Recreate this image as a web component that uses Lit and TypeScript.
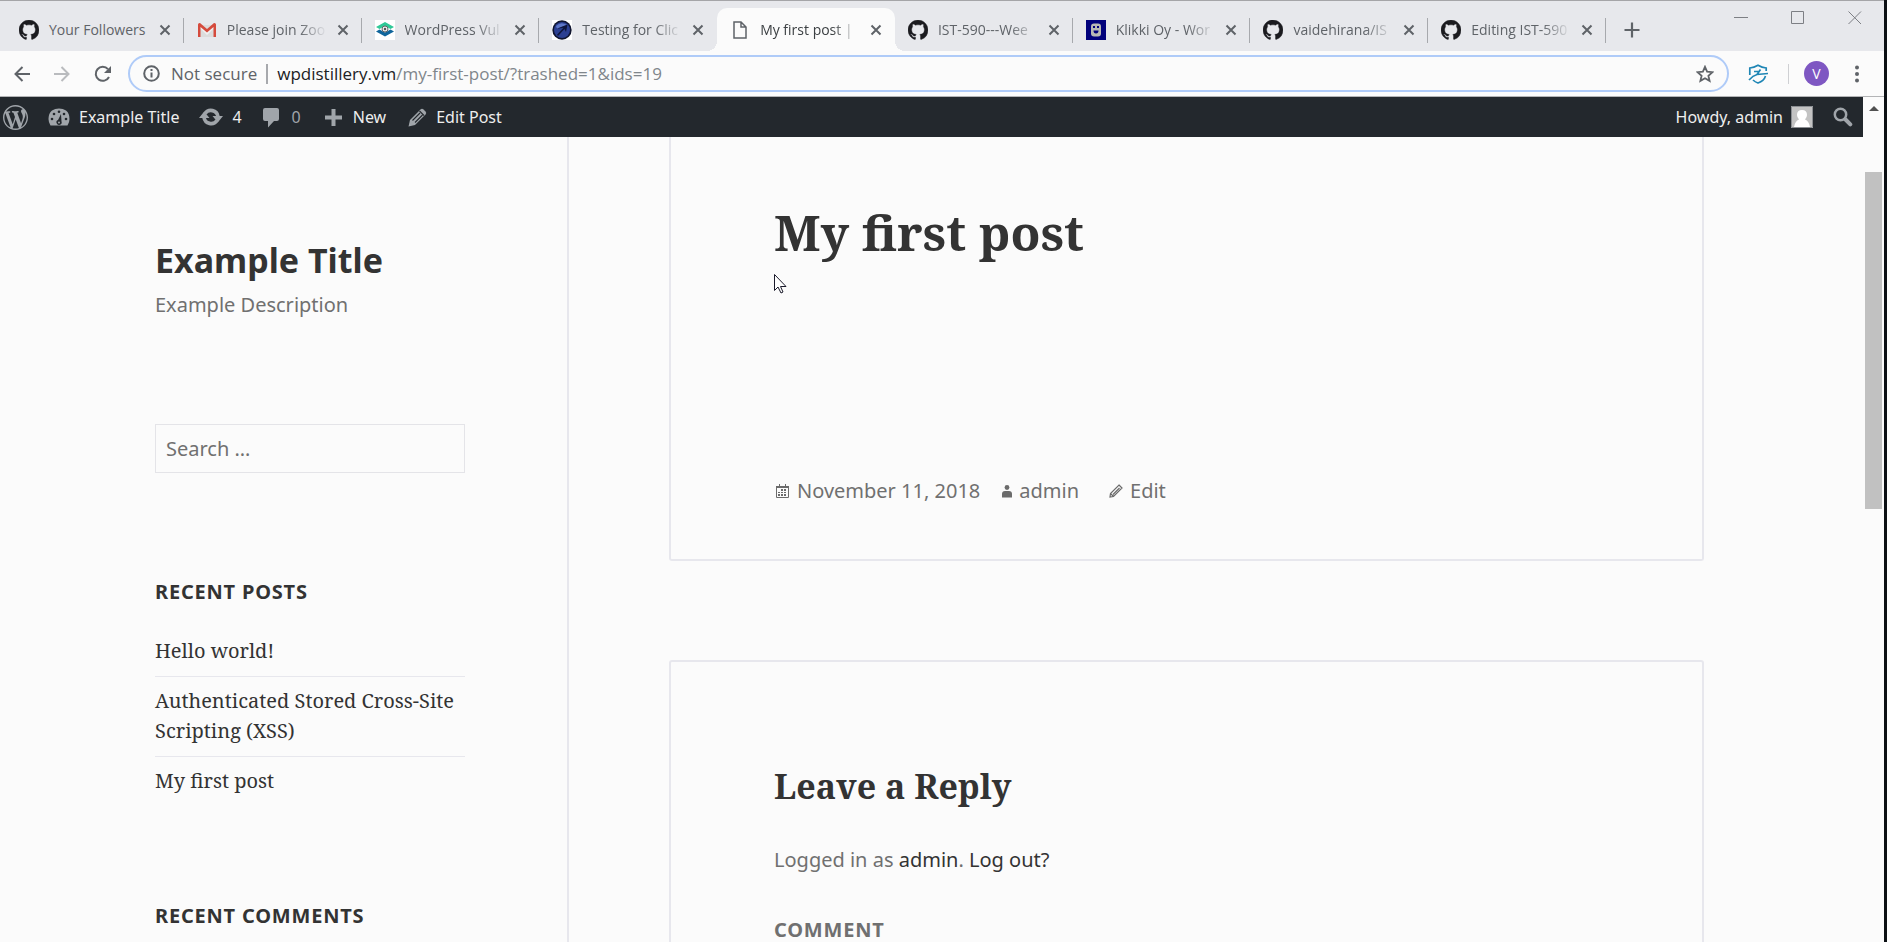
import { LitElement, html, css } from "lit";
import { customElement } from "lit/decorators.js";

const GITHUB = "M8 0C3.58 0 0 3.58 0 8c0 3.54 2.29 6.53 5.47 7.59.4.07.55-.17.55-.38 0-.19-.01-.82-.01-1.49-2.01.37-2.53-.49-2.69-.94-.09-.23-.48-.94-.82-1.13-.28-.15-.68-.52-.01-.53.63-.01 1.08.58 1.23.82.72 1.21 1.87.87 2.33.66.07-.52.28-.87.51-1.07-1.78-.2-3.64-.89-3.64-3.95 0-.87.31-1.59.82-2.15-.08-.2-.36-1.02.08-2.12 0 0 .67-.21 2.2.82.64-.18 1.32-.27 2-.27s1.36.09 2 .27c1.53-1.04 2.2-.82 2.2-.82.44 1.1.16 1.92.08 2.12.51.56.82 1.27.82 2.15 0 3.07-1.87 3.75-3.65 3.95.29.25.54.73.54 1.48 0 1.07-.01 1.93-.01 2.2 0 .21.15.46.55.38A8.01 8.01 0 0 0 16 8c0-4.42-3.58-8-8-8z";

const icons: Record<string, unknown> = {
  github: html`<svg width="20" height="20" viewBox="0 0 16 16" aria-hidden="true"><path fill="#1b1b1f" stroke="#1b1b1f" stroke-width=".3" d=${GITHUB} /></svg>`,
  gmail: html`<svg width="20" height="20" viewBox="0 0 20 20" aria-hidden="true"><path fill="#dcdcdc" d="M3 5h14v12H3z" /><path fill="#f1f1f1" d="M3 6l7 6 7-6v2l-7 7-7-7z" /><path fill="#d54b3d" d="M1 4.500Q1 3 2.600 3H3l7 6 7-6h.4Q19 3 19 4.500V17h-2.500V7L10 12.500 3.500 7v10H1z" /></svg>`,
  wpscan: html`<svg width="20" height="20" viewBox="0 0 20 20" aria-hidden="true"><path fill="#fff" d="M0 0h20v20H0z" /><path fill="#2fc997" d="M10 2l9 5-3.500 2L10 6 4.500 9 1 7z" /><path fill="#10659b" d="M1 11.500L4.500 9.500l5.500 3 5.500-3 3.500 2-9 5z" /><circle cx="10" cy="9" r="3" fill="#eee" stroke="#666" /><circle cx="10" cy="9" r="1.200" fill="#555" /></svg>`,
  owasp: html`<svg width="20" height="20" viewBox="0 0 20 20" aria-hidden="true"><path fill="#fff" d="M0 0h20v20H0z" /><circle cx="10" cy="10" r="9.700" fill="#10152f" /><circle cx="10" cy="10" r="8" fill="#2b3f92" /><path fill="#5f78c8" d="M4 6q5-5 11-1l-3 1-7 3z" /><path fill="#0f163c" d="M15.500 4.500L14 12l-1.500-3-6.500 7-1-1.200 6.500-7L4 9z" /></svg>`,
  page: html`<svg width="20" height="20" viewBox="0 0 20 20" fill="none" stroke="#5f6368" stroke-width="1.500" aria-hidden="true"><path d="M4 2h7l5 5v11H4zM11 2v5h5" /></svg>`,
  klikki: html`<svg width="20" height="20" viewBox="0 0 20 20" aria-hidden="true"><path fill="#02027c" d="M0 0h20v20H0z" /><rect x="5" y="3.500" width="10" height="13" rx="3" fill="#b9b9b4" /><path fill="#02027c" d="M7 6h2v2H7zM11 6h2v2h-2zM7.500 10.500h5q0 3-2.500 3t-2.500-3z" /></svg>`,
  close: html`<svg width="12" height="12" viewBox="0 0 12 12" stroke="#5f6368" stroke-width="2" aria-hidden="true"><path d="M1.500 1.500l9 9M10.500 1.500l-9 9" /></svg>`,
  newtab: html`<svg width="16" height="16" viewBox="0 0 16 16" stroke="#5f6368" stroke-width="2.200" aria-hidden="true"><path d="M8 .5v15M.5 8h15" /></svg>`,
  min: html`<svg width="14" height="14" viewBox="0 0 14 14" stroke="#7d7f84" aria-hidden="true"><path d="M0 6.500h14" /></svg>`,
  max: html`<svg width="14" height="14" viewBox="0 0 14 14" fill="none" stroke="#7d7f84" aria-hidden="true"><path d="M.5.5h12v12H.5z" /></svg>`,
  quit: html`<svg width="14" height="14" viewBox="0 0 14 14" stroke="#7d7f84" aria-hidden="true"><path d="M.5.5l12.500 12.500M13 .5L.5 13" /></svg>`,
  back: html`<svg width="16" height="16" viewBox="0 0 16 16" fill="none" stroke="#5f6368" stroke-width="2" aria-hidden="true"><path d="M16 8H1.500M8.500 1L1.500 8l7 7" /></svg>`,
  forward: html`<svg width="16" height="16" viewBox="0 0 16 16" fill="none" stroke="#b9bbbe" stroke-width="2" aria-hidden="true"><path d="M0 8h14.500M7.500 1l7 7-7 7" /></svg>`,
  reload: html`<svg width="18" height="18" viewBox="0 0 18 18" fill="none" stroke="#5f6368" stroke-width="2" aria-hidden="true"><path d="M15 12A7 7 0 1 1 14 4.200" /><path fill="#5f6368" stroke="none" d="M17 1v7h-7z" /></svg>`,
  info: html`<svg width="17" height="17" viewBox="0 0 17 17" fill="none" stroke="#5f6368" stroke-width="2" aria-hidden="true"><circle cx="8.500" cy="8.500" r="7.300" /><path d="M8.500 7.500v5M8.500 4v2" /></svg>`,
  star: html`<svg width="18" height="18" viewBox="0 0 18 18" fill="none" stroke="#5f6368" stroke-width="1.800" aria-hidden="true"><path d="M9 1.800l2.100 4.900 5.300.5-4 3.500 1.200 5.200L9 13.200l-4.600 2.700 1.200-5.200-4-3.500 5.300-.5z" /></svg>`,
  shield: html`<svg width="20" height="20" viewBox="0 0 20 20" fill="none" stroke="#1f86b5" stroke-width="1.700" aria-hidden="true"><path d="M1.800 11V4Q6 3.500 10 1.200 14 3.500 18.200 4v3M17.500 12q-1.500 5-7.500 7-3-1-5-3" /><path d="M1 16q4-4.500 8-5.500l11-1M6 7.500l4.500 0M12.500 5.500l-3.500 5" /></svg>`,
  dots: html`<svg width="4" height="18" viewBox="0 0 4 18" fill="#5f6368" aria-hidden="true"><circle cx="2" cy="2.500" r="2" /><circle cx="2" cy="9" r="2" /><circle cx="2" cy="15.500" r="2" /></svg>`,
  wordpress: html`<svg width="25" height="25" viewBox="0 0 20 20" fill="#a0a5aa" aria-hidden="true"><path d="M20 10c0-5.510-4.490-10-10-10C4.480 0 0 4.490 0 10c0 5.520 4.480 10 10 10 5.510 0 10-4.480 10-10zM7.780 15.370L4.370 6.220c.55-.02 1.170-.08 1.170-.08.5-.06.44-1.130-.06-1.110 0 0-1.450.11-2.370.11-.18 0-.37 0-.58-.01C4.120 2.690 6.870 1.110 10 1.110c2.330 0 4.450.87 6.050 2.340-.68-.11-1.650.39-1.650 1.580 0 .74.45 1.360.9 2.100.35.61.55 1.360.55 2.460 0 1.490-1.400 5-1.400 5l-3.030-8.370c.54-.02.82-.17.82-.17.5-.05.44-1.250-.06-1.220 0 0-1.440.12-2.380.12-.87 0-2.330-.12-2.330-.12-.5-.03-.56 1.200-.06 1.220l.92.08 1.260 3.410zM17.410 10c.24-.64.74-1.870.43-4.250.7 1.290 1.050 2.710 1.050 4.250 0 3.290-1.730 6.240-4.400 7.780.97-2.590 1.940-5.200 2.920-7.780zM6.100 18.090C3.120 16.650 1.110 13.530 1.110 10c0-1.300.23-2.480.72-3.590C3.250 10.300 4.670 14.200 6.100 18.090zm4.030-6.630l2.580 6.980c-.86.29-1.760.45-2.710.45-.79 0-1.570-.11-2.290-.33.81-2.380 1.620-4.740 2.420-7.100z" /></svg>`,
  gauge: html`<svg width="22" height="20" viewBox="0 0 22 20" aria-hidden="true"><path fill="#a0a5aa" d="M2.500 18.500Q.5 15.500.5 12 .5 6 4 3.500 7 1.500 11 1.500t7 2Q21.500 6 21.500 12q0 3.500-2 6.500z" /><g fill="#23282d"><circle cx="4" cy="12" r="1.300" /><circle cx="6" cy="7" r="1.300" /><circle cx="11" cy="4.700" r="1.300" /><circle cx="16" cy="7" r="1.300" /><circle cx="18" cy="12" r="1.300" /><path d="M13 7l.5 7.500a2.600 2.600 0 1 1-3.500-1.500z" /></g><circle cx="11" cy="15.500" r="1" fill="#a0a5aa" /></svg>`,
  update: html`<svg width="24" height="20" viewBox="0 0 24 20" fill="none" stroke="#a0a5aa" stroke-width="3.600" aria-hidden="true"><path d="M6 6.500A7.200 7.200 0 0 1 19 9.500M18 13.500A7.200 7.200 0 0 1 5 10.500" /><path fill="#a0a5aa" stroke="none" d="M13.500 9H24l-5.200 6.500zM0 11h10.500L5.200 4.500z" /></svg>`,
  comment: html`<svg width="18" height="21" viewBox="0 0 18 21" fill="#a0a5aa" aria-hidden="true"><path d="M3 1h12q2 0 2 2v9q0 2-2 2h-3l-6 6.500V14H3q-2 0-2-2V3q0-2 2-2z" /></svg>`,
  plus: html`<svg width="17" height="17" viewBox="0 0 17 17" fill="#a0a5aa" aria-hidden="true"><path d="M6.500 0h4v6.500H17v4h-6.500V17h-4v-6.500H0v-4h6.500z" /></svg>`,
  pencil: html`<svg width="19" height="19" viewBox="0 0 19 19" aria-hidden="true"><path fill="#a0a5aa" d="M12.500 1.500q1.500-1.500 3 0l2 2q1.500 1.500 0 3L7 17 .5 18.500 2 12z" /><path stroke="#23282d" stroke-width="1.100" fill="none" d="M4.500 12.500L12 5M7 14.500L14.500 7M11.500 3l4.500 4.500" /></svg>`,
  search: html`<svg width="20" height="20" viewBox="0 0 20 20" fill="none" stroke="#a0a5aa" aria-hidden="true"><circle cx="7.500" cy="7.500" r="5.700" stroke-width="2.500" /><path stroke-width="4" stroke-linecap="round" d="M12.500 12.500l4.800 4.800" /></svg>`,
  face: html`<svg width="22" height="22" viewBox="0 0 22 22" aria-hidden="true"><path fill="#c3c3c3" d="M0 0h22v22H0z" /><path fill="#fff" d="M3 21q1-6 5-7.500Q6 11.500 6 9q0-5 5-5t5 5q0 2.500-2 4.500 4 1.500 5 7.500z" /><path fill="none" stroke="#8b8e92" d="M.5.5h21v21H.5z" /></svg>`,
  calendar: html`<svg width="16" height="15" viewBox="-2 0 16 15" aria-hidden="true"><path fill="none" stroke="#6b6b6b" d="M.5 2.500h12v11H.5z" /><path fill="#6b6b6b" d="M0 2h13v2H0zM3 0h1v3H3zM9 0h1v3H9zM5 5h2v2H5zM8 5h2v2H8zM2 8h2v1H2zM5 8h2v1H5zM8 8h2v1H8zM2 10h2v2H2zM5 10h2v2H5zM8 10h2v2H8z" /></svg>`,
  person: html`<svg width="10" height="13" viewBox="0 0 10 13" fill="#6b6b6b" aria-hidden="true"><circle cx="5" cy="2.500" r="2.400" /><path d="M0 12.500V9q0-3 3-3h4q3 0 3 3v3.500z" /></svg>`,
  edit: html`<svg width="22" height="14" viewBox="-8 0 22 14" fill="none" stroke="#6b6b6b" stroke-width="1.200" aria-hidden="true"><path d="M10 1l3 3-8.500 8.500L1 13l.5-3.500zM1.500 9.500L4.500 12.500M4 10.500l6.500-6.500" /></svg>`,
};

const tabs = [
  { icon: "github", title: "Your Followers" },
  { icon: "gmail", title: "Please join Zoo", fade: true },
  { icon: "wpscan", title: "WordPress Vul", fade: true },
  { icon: "owasp", title: "Testing for Clic", fade: true },
  { icon: "page", title: "My first post |", active: true, fade: true },
  { icon: "github", title: "IST-590---Wee", fade: true },
  { icon: "klikki", title: "Klikki Oy - Wor", fade: true },
  { icon: "github", title: "vaidehirana/IS", fade: true },
  { icon: "github", title: "Editing IST-590", fade: true },
];

@customElement("browser-chrome")
export class BrowserChrome extends LitElement {
  static styles = css`
    :host { display: block; font-family: "Open Sans", "Noto Sans", sans-serif; color: #5f6368; }
    * { box-sizing: border-box; }
    svg { display: block; flex: none; }
    button { display: flex; align-items: center; justify-content: center; padding: 0; border: 0; background: none; font: inherit; color: inherit; }
    .strip { display: flex; height: 51px; padding: 7px 0 0 6px; border-top: 1px solid #a5a5a8; background: #e7e8ec; }
    .tabs { display: flex; flex: 0 1 1600px; min-width: 0; }
    .tab { position: relative; flex: 1; min-width: 0; display: flex; align-items: center; height: 43px; padding: 0 13px; gap: 10px; font-size: 14px; }
    .tab::after { content: ""; position: absolute; right: 0; top: 10px; height: 25px; border-right: 1px solid #a7a9ad; }
    .tab.active { background: #fbfbfb; border-radius: 10px 10px 0 0; color: #3c4043; }
    .tab.active::after, .tab.before::after { display: none; }
    .tab.active::before { content: ""; position: absolute; left: -10px; right: -10px; bottom: 0; height: 10px; background: radial-gradient(circle at 0 0, transparent 10px, #fbfbfb 10px) left / 10px 10px no-repeat, radial-gradient(circle at 100% 0, transparent 10px, #fbfbfb 10px) right / 10px 10px no-repeat; }
    .title { flex: 1; white-space: nowrap; }
    .fade { mask-image: linear-gradient(90deg, #000 72%, transparent); }
    .new { width: 52px; height: 43px; }
    .controls { display: flex; margin-left: auto; height: 18px; gap: 43px; padding: 2px 22px 0 0; }
    .bar { display: flex; align-items: center; height: 46px; padding: 0 25px 0 14px; border-bottom: 1px solid #b3b4b6; background: #fbfbfb; font-size: 17px; }
    .nav { display: flex; align-items: center; gap: 24px; width: 114px; }
    .box { flex: 1; display: flex; align-items: center; height: 37px; padding: 0 13px; border: 2px solid #afcbf8; border-radius: 19px; }
    .secure { margin-left: 11px; padding-right: 9px; border-right: 2px solid #a7a9ad; line-height: 20px; white-space: nowrap; }
    .url { flex: 1; margin-left: 9px; white-space: nowrap; color: #80868b; }
    .host { color: #202124; }
    .tools { display: flex; align-items: center; margin-left: 19px; }
    .rule { width: 1px; height: 20px; margin: 0 15px 0 20px; background: #cfd0d3; }
    .user { width: 25px; height: 25px; margin-right: 26px; border-radius: 50%; background: #7e57c2; color: #fff; font-size: 14px; }
  `;
  render() {
    return html`
      <nav class="strip" aria-label="Tabs">
        <div class="tabs">
          ${tabs.map((t, i) => html`
            <div class="tab ${t.active ? "active" : ""} ${tabs[i + 1]?.active ? "before" : ""}">
              ${icons[t.icon]}<span class="title ${t.fade ? "fade" : ""}">${t.title}</span>
              <button aria-label="Close tab">${icons.close}</button>
            </div>`)}
        </div>
        <button class="new" aria-label="New tab">${icons.newtab}</button>
        <div class="controls">
          <button aria-label="Minimize">${icons.min}</button>
          <button aria-label="Maximize">${icons.max}</button>
          <button aria-label="Close">${icons.quit}</button>
        </div>
      </nav>
      <div class="bar">
        <div class="nav">
          <button aria-label="Back">${icons.back}</button>
          <button aria-label="Forward">${icons.forward}</button>
          <button aria-label="Reload">${icons.reload}</button>
        </div>
        <div class="box">
          ${icons.info}<span class="secure">Not secure</span>
          <span class="url"><span class="host">wpdistillery.vm</span>/my-first-post/?trashed=1&amp;ids=19</span>
          <button aria-label="Bookmark">${icons.star}</button>
        </div>
        <div class="tools">
          <button aria-label="Privacy">${icons.shield}</button>
          <span class="rule"></span>
          <button class="user" aria-label="Profile">V</button>
          <button aria-label="Menu">${icons.dots}</button>
        </div>
      </div>`;
  }
}

@customElement("admin-bar")
export class AdminBar extends LitElement {
  static styles = css`
    :host { display: block; font: 16px/40px "Noto Sans", sans-serif; }
    .bar { display: flex; align-items: center; height: 40px; padding: 0 10px 0 3px; background: #23282d; }
    a { display: flex; align-items: center; color: #eee; text-decoration: none; white-space: nowrap; }
    svg { display: block; }
    .item { gap: 9px; margin-right: 20px; }
    .count { gap: 12px; margin-right: 24px; color: #a0a5aa; }
    .wide { gap: 11px; margin-right: 22px; }
    .end { margin-left: auto; gap: 8px; margin-right: 20px; }
  `;
  render() {
    return html`<nav class="bar" aria-label="Toolbar">
      <a class="item" href="#" aria-label="About WordPress">${icons.wordpress}</a>
      <a class="item" href="#">${icons.gauge}Example Title</a>
      <a class="item" href="#">${icons.update}4</a>
      <a class="count" href="#">${icons.comment}0</a>
      <a class="wide" href="#">${icons.plus}New</a>
      <a class="item" href="#">${icons.pencil}Edit Post</a>
      <a class="end" href="#">Howdy, admin${icons.face}</a>
      <a href="#" aria-label="Search">${icons.search}</a>
    </nav>`;
  }
}

@customElement("app-root")
export class AppRoot extends LitElement {
  static styles = css`
    :host { display: flex; flex-direction: column; height: 100vh; overflow: hidden; box-sizing: border-box; border-right: 3px solid #0c1014; background: #fbfbfb; color: #707070; font: 20px/30px "Noto Sans", sans-serif; }
    * { box-sizing: border-box; }
    a { color: #333; text-decoration: none; }
    h1, h2, h3, p, ul { margin: 0; padding: 0; }
    .view { display: flex; flex: 1; min-height: 0; }
    .page { flex: 1; min-width: 0; display: flex; flex-direction: column; }
    .body { flex: 1; min-height: 0; display: flex; overflow: hidden; }
    .side { flex: none; width: 569px; padding: 98px 102px 0 155px; border-right: 2px solid #e7e7ed; }
    .name { font-size: 34px; line-height: 50px; color: #333; }
    .about { margin-top: 5px; }
    .find { display: block; width: 100%; height: 49px; margin: 104px 0; padding: 0 10px; border: 1px solid #e4e4e8; background: #fbfbfb; font: inherit; color: #707070; }
    .find::placeholder { color: #707070; opacity: 1; }
    .head { font-size: 20px; line-height: 30px; letter-spacing: 0.04em; text-transform: uppercase; color: #333; }
    .list { margin: 20px 0 95px; list-style: none; font-family: "Noto Serif", "DejaVu Serif", serif; font-size: 20px; }
    .list li { padding: 9px 0 10px; border-top: 1px solid #e7e7ed; }
    .list li:first-child { border-top: 0; }
    .main { flex: 1; min-width: 0; padding: 0 159px 0 100px; }
    .card { padding: 0 103px; border: 2px solid #e7e7ed; border-radius: 3px; }
    .post { padding-top: 65px; padding-bottom: 53px; border-top: 0; border-radius: 0 0 3px 3px; }
    .serif { font-family: "Noto Serif", "DejaVu Serif", serif; color: #333; }
    .heading { font-size: 49px; line-height: 60px; }
    .pointer { position: absolute; left: 774px; top: 274px; }
    .meta { display: flex; align-items: center; margin-top: 214px; }
    .meta a { display: flex; align-items: center; gap: 7px; margin-right: 22px; color: #707070; }
    .reply { margin-top: 99px; padding-top: 104px; }
    .sub { font-size: 34px; line-height: 40px; }
    .logged { margin-top: 39px; }
    .label { display: block; margin-top: 40px; font-weight: 700; letter-spacing: 0.04em; text-transform: uppercase; }
    .box { width: 100%; height: 120px; border: 1px solid #e4e4e8; background: #fbfbfb; }
    .track { flex: none; width: 21px; padding: 8px 2px 0; background: #fbfbfb; }
    .up { display: block; margin: 0 auto; }
    .thumb { height: 337px; margin-top: 59px; background: #c1c1c1; }
  `;
  render() {
    return html`
      <browser-chrome></browser-chrome>
      <div class="view">
        <div class="page">
          <admin-bar></admin-bar>
          <div class="body">
            <aside class="side">
              <h1 class="name">Example Title</h1>
              <p class="about">Example Description</p>
              <input class="find" type="search" placeholder="Search …" aria-label="Search for" />
              <h2 class="head">Recent Posts</h2>
              <ul class="list">
                <li><a href="#">Hello world!</a></li>
                <li><a href="#">Authenticated Stored Cross-Site Scripting (XSS)</a></li>
                <li><a href="#">My first post</a></li>
              </ul>
              <h2 class="head">Recent Comments</h2>
            </aside>
            <main class="main">
              <article class="card post">
                <h1 class="serif heading">My first post</h1>
                <footer class="meta">
                  <a href="#">${icons.calendar}November 11, 2018</a>
                  <a href="#">${icons.person}admin</a>
                  <a href="#">${icons.edit}Edit</a>
                </footer>
              </article>
              <section class="card reply">
                <h3 class="serif sub">Leave a Reply</h3>
                <p class="logged">Logged in as <a href="#">admin</a>. <a href="#">Log out?</a></p>
                <label class="label" for="comment">Comment</label>
                <textarea class="box" id="comment"></textarea>
              </section>
            </main>
          </div>
        </div>
        <div class="track">
          <svg class="up" width="10" height="8" viewBox="0 0 10 8" aria-hidden="true"><path fill="#505050" d="M0 6l5-5 5 5z" /></svg>
          <div class="thumb"></div>
        </div>
      </div>
      <svg class="pointer" width="13" height="20" viewBox="0 0 13 20" aria-hidden="true"><path fill="#fff" stroke="#1a1a2a" d="M.5.5v16l3.500-3.500 3 6 2-1-2.500-5.500H12z" /></svg>`;
  }
}
